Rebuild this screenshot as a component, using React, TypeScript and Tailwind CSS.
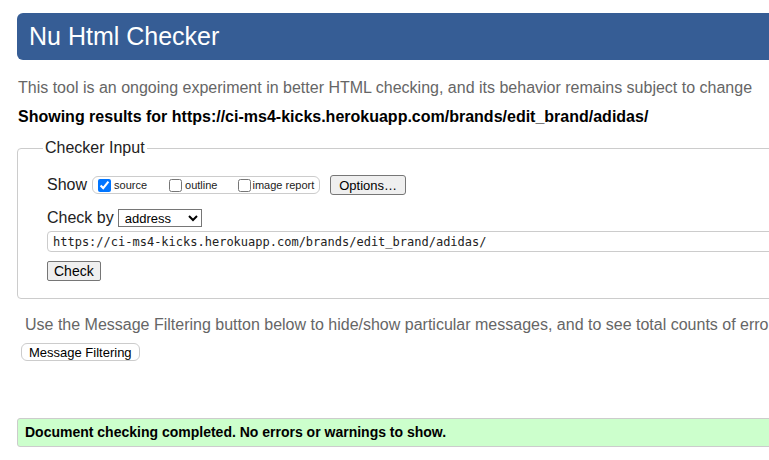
import React from "react";

const App = () => {
  return (
    <div className="w-[769px] h-[460px] overflow-hidden bg-white font-['Liberation_Sans',Arial,sans-serif]">
      <div className="w-[900px] pl-[17px] pt-[13px]">
        {/* Title bar */}
        <div className="h-[47px] bg-[#365d95] rounded-[6px] flex items-center pl-[12px]">
          <h1 className="text-white text-[25px] leading-none">Nu Html Checker</h1>
        </div>

        <p className="mt-[19px] ml-px text-[16px] leading-[18px] text-[#666]">
          This tool is an ongoing experiment in better HTML checking, and its behavior remains subject to change
        </p>
        <p className="mt-[11px] ml-px text-[16px] leading-[18px] font-bold text-black">
          Showing results for https://ci-ms4-kicks.herokuapp.com/brands/edit_brand/adidas/
        </p>

        {/* Checker input */}
        <fieldset className="mt-[13px] border border-[#ccc] rounded-[4px] pl-[29px] pb-[17px] h-[160px]">
          <legend className="ml-[-4px] px-[2px] text-[16px] leading-[18px] text-[#222]">Checker Input</legend>

          <div className="flex items-center mt-[18px] h-[20px]">
            <span className="text-[16px] text-[#222] mr-[5px]">Show</span>
            <div className="flex items-center h-[18px] border border-[#ccc] rounded-[6px] pl-[5px] pr-[5px] text-[11px] text-[#222]">
              <label className="flex items-center">
                <input type="checkbox" defaultChecked className="w-[13px] h-[13px] m-0 mr-[3px] accent-[#0075ff]" />
                source
              </label>
              <label className="flex items-center ml-[22px]">
                <input type="checkbox" className="w-[13px] h-[13px] m-0 mr-[3px]" />
                outline
              </label>
              <label className="flex items-center ml-[21px]">
                <input type="checkbox" className="w-[13px] h-[13px] m-0 mr-[1px]" />
                image report
              </label>
            </div>
            <button className="ml-[10px] h-[20px] px-[8px] text-[13px] text-black bg-[#efefef] border border-[#767676] rounded-[3px]">
              Options…
            </button>
          </div>

          <div className="flex items-center mt-[13px] h-[20px]">
            <span className="text-[16px] text-[#222] mr-[4px]">Check by</span>
            <select className="w-[84px] h-[18px] text-[13px] text-black border border-[#767676] rounded-none bg-white px-[2px]">
              <option>address</option>
            </select>
          </div>

          <div className="mt-[3px] h-[21px] border border-[#ccc] rounded-[4px] flex items-center pl-[5px] mr-[-1px]">
            <span className="font-['DejaVu_Sans_Mono',monospace] text-[12px] text-[#222]">
              https://ci-ms4-kicks.herokuapp.com/brands/edit_brand/adidas/
            </span>
          </div>

          <button className="mt-[9px] h-[20px] px-[6px] text-[14px] leading-none text-black bg-[#efefef] border border-[#767676] rounded-[2px]">
            Check
          </button>
        </fieldset>

        <p className="mt-[17px] ml-[8px] text-[16px] leading-[18px] text-[#666] whitespace-nowrap">
          Use the Message Filtering button below to hide/show particular messages, and to see total counts of errors and warnings.
        </p>
        <button className="mt-[9px] ml-[4px] h-[18px] px-[7px] text-[13px] leading-none text-black bg-white border border-[#ccc] rounded-[6px]">
          Message Filtering
        </button>

        <div className="mt-[54px] h-[29px] bg-[#ccffcc] border border-[#ccc] rounded-[3px] flex items-center pl-[7px]">
          <span className="text-[14px] font-bold text-black">Document checking completed. No errors or warnings to show.</span>
        </div>
      </div>
    </div>
  );
};

export default App;
